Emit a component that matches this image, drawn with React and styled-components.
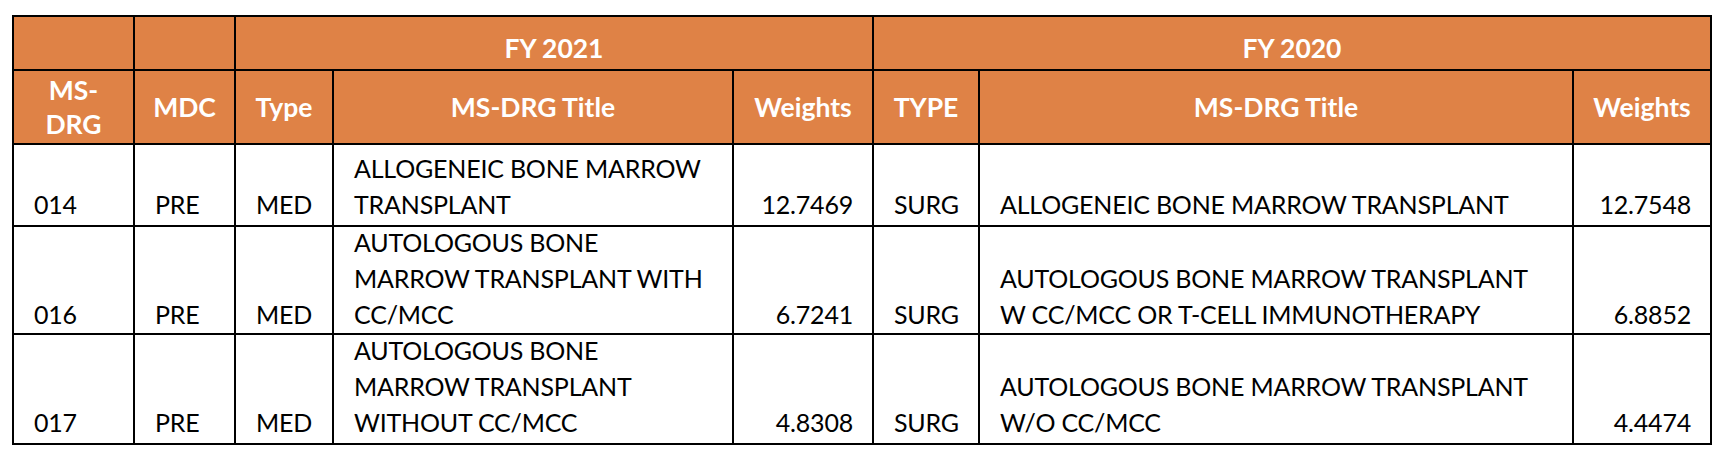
import styled, { createGlobalStyle } from "styled-components";

const GlobalStyle = createGlobalStyle`
  html, body {
    margin: 0;
    padding: 0;
    background: #ffffff;
  }
  body {
    font-family: "Lato", "Liberation Sans", sans-serif;
  }
`;

const Page = styled.div`
  padding: 15px 0 0 12px;
`;

const Table = styled.table`
  width: 1700px;
  table-layout: fixed;
  border-collapse: collapse;
  font-family: "Lato", "Liberation Sans", sans-serif;
  font-size: 25px;
  line-height: 36px;
  color: #000;
`;

const Row = styled.tr`
  height: ${({ $h }) => $h}px;
`;

const Head = styled.th`
  background: #df8246;
  color: #fff;
  font-size: 26.5px;
  font-weight: 700;
  border: 2px solid #000;
  padding: ${({ $top }) => ($top ? "0 0 4px" : "0 4px")};
  text-align: center;
  vertical-align: ${({ $top }) => ($top ? "bottom" : "middle")};
  line-height: 34px;
`;

const Cell = styled.td`
  border: 2px solid #000;
  padding: 0 19px ${({ $pb }) => $pb}px 20px;
  vertical-align: bottom;
  text-align: ${({ $right }) => ($right ? "right" : "left")};
  letter-spacing: -0.2px;
  white-space: nowrap;
`;

/* wrapped titles sit on the bottom edge and may rise into the top padding */
const Title = styled.div`
  margin-top: -10px;
`;

const widths = [121, 101, 98, 400, 140, 106, 594, 138];

const rows = [
  {
    drg: "014",
    h: 82,
    pb: 3,
    title21: ["ALLOGENEIC BONE MARROW", "TRANSPLANT"],
    w21: "12.7469",
    title20: ["ALLOGENEIC BONE MARROW TRANSPLANT"],
    w20: "12.7548",
  },
  {
    drg: "016",
    h: 108,
    pb: 1,
    title21: ["AUTOLOGOUS BONE", "MARROW TRANSPLANT WITH", "CC/MCC"],
    w21: "6.7241",
    title20: [
      "AUTOLOGOUS BONE MARROW TRANSPLANT",
      "W CC/MCC OR T-CELL IMMUNOTHERAPY",
    ],
    w20: "6.8852",
  },
  {
    drg: "017",
    h: 110,
    pb: 3,
    title21: ["AUTOLOGOUS BONE", "MARROW TRANSPLANT", "WITHOUT CC/MCC"],
    w21: "4.8308",
    title20: ["AUTOLOGOUS BONE MARROW TRANSPLANT", "W/O CC/MCC"],
    w20: "4.4474",
  },
];

const Lines = ({ lines }) => (
  <Title>
    {lines.map((l, i) => (
      <span key={i}>
        {i > 0 && <br />}
        {l}
      </span>
    ))}
  </Title>
);

export default function App() {
  return (
    <Page>
      <GlobalStyle />
      <Table>
        <colgroup>
          {widths.map((w, i) => (
            <col key={i} style={{ width: w }} />
          ))}
        </colgroup>
        <thead>
          <Row $h={54}>
            <Head $top />
            <Head $top />
            <Head $top colSpan={3}>FY 2021</Head>
            <Head $top colSpan={3}>FY 2020</Head>
          </Row>
          <Row $h={74}>
            <Head>
              MS-
              <br />
              DRG
            </Head>
            <Head>MDC</Head>
            <Head>Type</Head>
            <Head>MS-DRG Title</Head>
            <Head>Weights</Head>
            <Head>TYPE</Head>
            <Head>MS-DRG Title</Head>
            <Head>Weights</Head>
          </Row>
        </thead>
        <tbody>
          {rows.map((r) => (
            <Row key={r.drg} $h={r.h}>
              <Cell $pb={r.pb}>{r.drg}</Cell>
              <Cell $pb={r.pb}>PRE</Cell>
              <Cell $pb={r.pb}>MED</Cell>
              <Cell $pb={r.pb}>
                <Lines lines={r.title21} />
              </Cell>
              <Cell $pb={r.pb} $right>
                {r.w21}
              </Cell>
              <Cell $pb={r.pb}>SURG</Cell>
              <Cell $pb={r.pb}>
                <Lines lines={r.title20} />
              </Cell>
              <Cell $pb={r.pb} $right>
                {r.w20}
              </Cell>
            </Row>
          ))}
        </tbody>
      </Table>
    </Page>
  );
}
